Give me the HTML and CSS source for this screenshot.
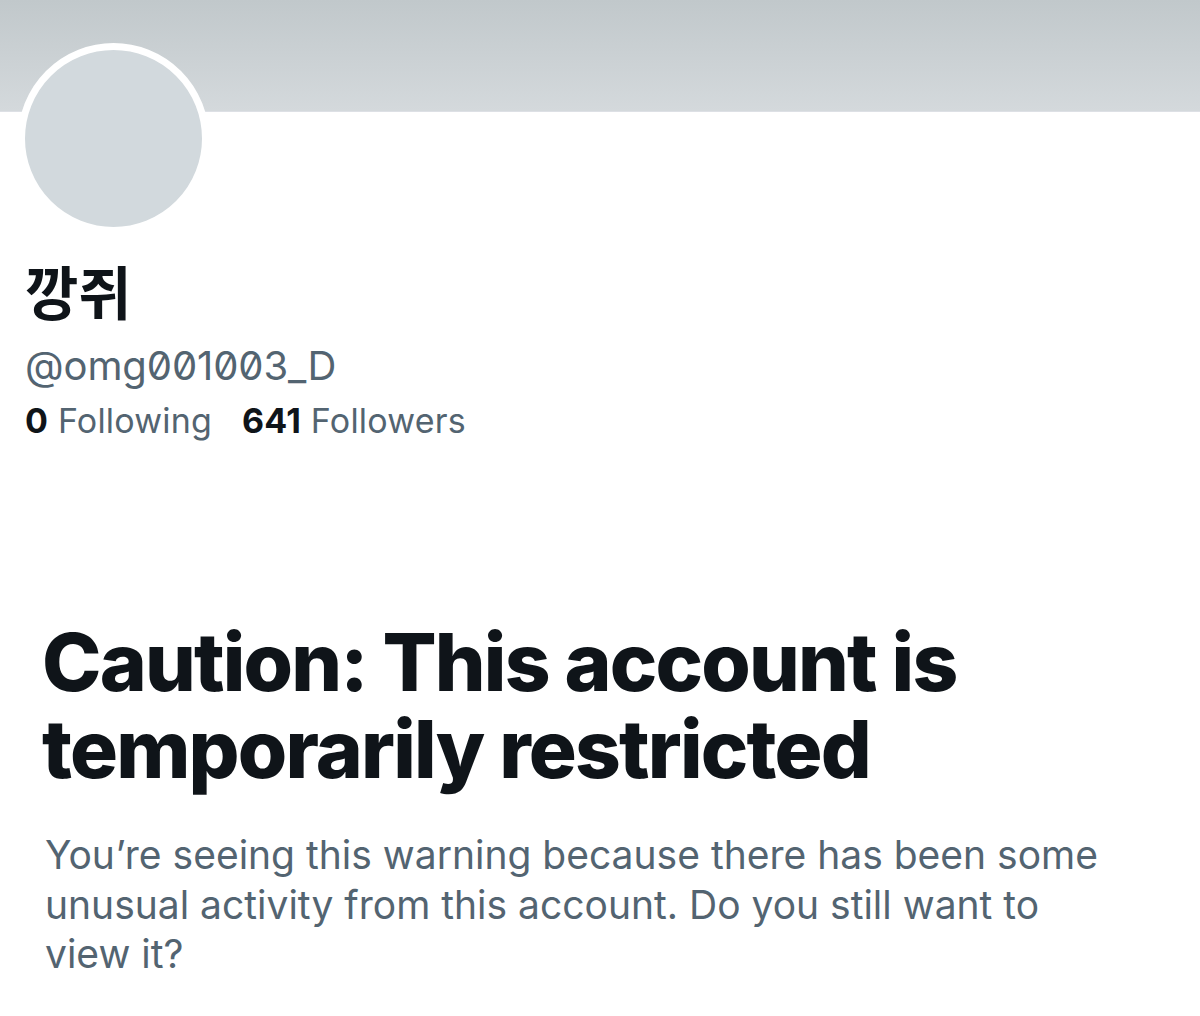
FILE: index.html
```html
<!DOCTYPE html>
<html lang="en">
<head>
<meta charset="utf-8">
<title>깡쥐 (@omg001003_D)</title>
<link rel="stylesheet" href="styles.css">
</head>
<body>
<div class="page">
  <div class="banner"></div>
  <div class="avatar"></div>
  <div class="profile">
    <h1 class="name">깡쥐</h1>
    <div class="handle">@omg001003_D</div>
    <div class="stats">
      <span class="stat"><b>0</b> Following</span>
      <span class="stat"><b>641</b> Followers</span>
    </div>
  </div>
  <div class="warning">
    <h2 class="title">Caution: This account is temporarily restricted</h2>
    <p class="desc">You’re seeing this warning because there has been some unusual activity from this account. Do you still want to view it?</p>
  </div>
</div>
</body>
</html>
```

FILE: styles.css
```css
html, body {
  margin: 0;
  padding: 0;
  background: #ffffff;
}
body {
  font-family: Inter, "Noto Sans", "Noto Sans CJK KR", sans-serif;
  color: #0f1419;
}
.page {
  width: 1200px;
  height: 1016px;
  overflow: hidden;
}
.banner {
  height: 112px;
  background: linear-gradient(#c1c8cb, #d4d9dc);
  border-bottom: 1px solid #dde0e5;
  box-sizing: border-box;
}
.avatar {
  width: 177px;
  height: 177px;
  border: 7px solid #ffffff;
  border-radius: 50%;
  background: #d2d9dd;
  margin: -69px 0 0 18px;
  position: relative;
}
.profile {
  padding: 0 0 0 25px;
}
.name {
  margin: 21px 0 0 0;
  font-family: "Noto Sans CJK KR", sans-serif;
  font-weight: 700;
  font-size: 58px;
  line-height: 70px;
}
.handle {
  margin-top: 18px;
  font-size: 40px;
  line-height: 46px;
  color: #536471;
  font-feature-settings: "zero" 1;
  letter-spacing: -0.1px;
}
.stats {
  margin-top: 10px;
  display: flex;
  gap: 30px;
  font-size: 34px;
  line-height: 44px;
  color: #536471;
  letter-spacing: 0.2px;
}
.stat b {
  color: #0f1419;
  font-weight: 700;
}
.warning {
  padding: 0 80px 0 42px;
  margin-top: 175px;
}
.title {
  margin: 0;
  font-size: 80px;
  line-height: 87px;
  font-weight: 800;
  letter-spacing: -1.8px;
}
.desc {
  margin: 38px 0 0 3px;
  font-size: 39px;
  line-height: 49.5px;
  color: #536471;
}
```
